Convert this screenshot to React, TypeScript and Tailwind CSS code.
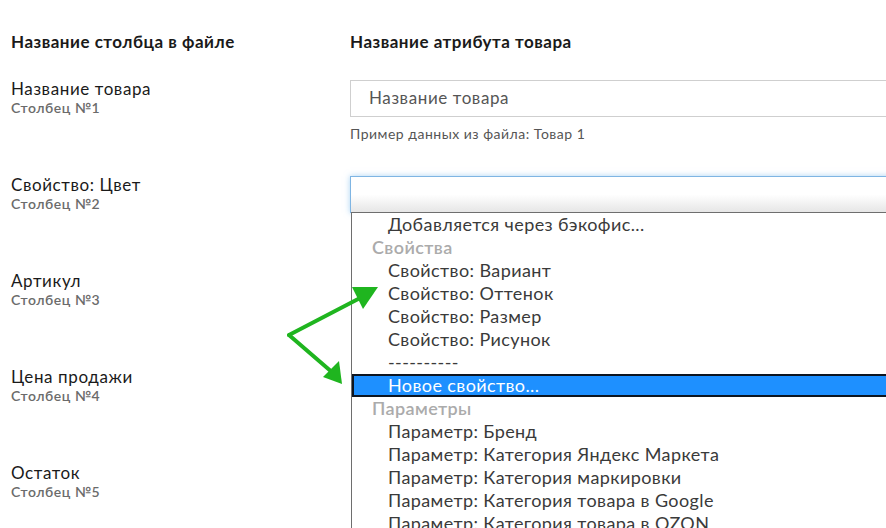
import React from "react";

type Row = { label: string; col: number };

const rows: Row[] = [
  { label: "Название товара", col: 1 },
  { label: "Свойство: Цвет", col: 2 },
  { label: "Артикул", col: 3 },
  { label: "Цена продажи", col: 4 },
  { label: "Остаток", col: 5 },
];

type Opt = { text: string; kind: "item" | "group" | "active" };

const options: Opt[] = [
  { text: "Добавляется через бэкофис...", kind: "item" },
  { text: "Свойства", kind: "group" },
  { text: "Свойство: Вариант", kind: "item" },
  { text: "Свойство: Оттенок", kind: "item" },
  { text: "Свойство: Размер", kind: "item" },
  { text: "Свойство: Рисунок", kind: "item" },
  { text: "----------", kind: "item" },
  { text: "Новое свойство...", kind: "active" },
  { text: "Параметры", kind: "group" },
  { text: "Параметр: Бренд", kind: "item" },
  { text: "Параметр: Категория Яндекс Маркета", kind: "item" },
  { text: "Параметр: Категория маркировки", kind: "item" },
  { text: "Параметр: Категория товара в Google", kind: "item" },
  { text: "Параметр: Категория товара в OZON", kind: "item" },
];

function Options() {
  return (
    <div className="absolute left-[351px] top-[212px] w-[560px] h-[330px] bg-white border-l border-t border-[#6e6e6e] text-[18px] tracking-[0.4px] text-[#3a3a3a]">
      {options.map((o, i) => {
        if (o.kind === "group")
          return (
            <div key={i} className="h-[23px] leading-[23px] pl-[20px] font-semibold text-[#ababab]">
              {o.text}
            </div>
          );
        if (o.kind === "active")
          return (
            <div
              key={i}
              className="h-[23px] leading-[19px] pl-[34px] bg-[#1e90ff] text-white border-2 border-[#0d1520]"
            >
              {o.text}
            </div>
          );
        return (
          <div key={i} className="h-[23px] leading-[23px] pl-[36px]">
            {o.text}
          </div>
        );
      })}
    </div>
  );
}

function Arrows() {
  return (
    <svg
      className="absolute left-0 top-0 pointer-events-none"
      width="886"
      height="528"
      viewBox="0 0 886 528"
    >
      <g stroke="#1fb51f" strokeWidth="4" fill="none" strokeLinecap="round" strokeLinejoin="round">
        <path d="M289 335 L362 297" />
        <path d="M289 335 L333 373" />
      </g>
      <g fill="#1fb51f">
        <polygon points="378,287 352,287 363,309" />
        <polygon points="342,384 323,377 339,361" />
      </g>
    </svg>
  );
}

export default function App() {
  return (
    <div
      className="relative w-[886px] h-[528px] overflow-hidden bg-white text-[#1a1a1a]"
      style={{ fontFamily: "Lato, 'Open Sans', sans-serif" }}
    >
      <div className="flex pt-[32px] h-[80px] font-bold text-[17px] tracking-[0.5px] leading-[20px]">
        <div className="w-[350px] shrink-0 pl-[11px]">Название столбца в файле</div>
        <div>Название атрибута товара</div>
      </div>

      {rows.map((r, i) => (
        <div key={r.col} className="flex h-[96px]">
          <div className="w-[350px] shrink-0 pl-[11px]">
            <div className="text-[17px] tracking-[0.6px] leading-[18px]">{r.label}</div>
            <div className="text-[14px] tracking-[0.5px] leading-[20px] font-semibold text-[#6b6b6b]">
              Столбец №{r.col}
            </div>
          </div>
          <div className="w-[560px] shrink-0">
            {i === 0 && (
              <>
                <div className="h-[37px] border border-[#cfcfcf] pl-[18px] text-[17px] tracking-[0.6px] leading-[33px] text-[#555]">
                  Название товара
                </div>
                <div className="mt-[8px] text-[14px] tracking-[0.5px] leading-[18px] text-[#555]">
                  Пример данных из файла: Товар 1
                </div>
              </>
            )}
            {i === 1 && (
              <div className="h-[37px] border border-[#7fb5e3] bg-gradient-to-b from-white from-50% to-[#e6e6e6] shadow-[0_0_6px_rgba(102,175,233,0.55)]" />
            )}
          </div>
        </div>
      ))}

      <Options />
      <Arrows />
    </div>
  );
}
